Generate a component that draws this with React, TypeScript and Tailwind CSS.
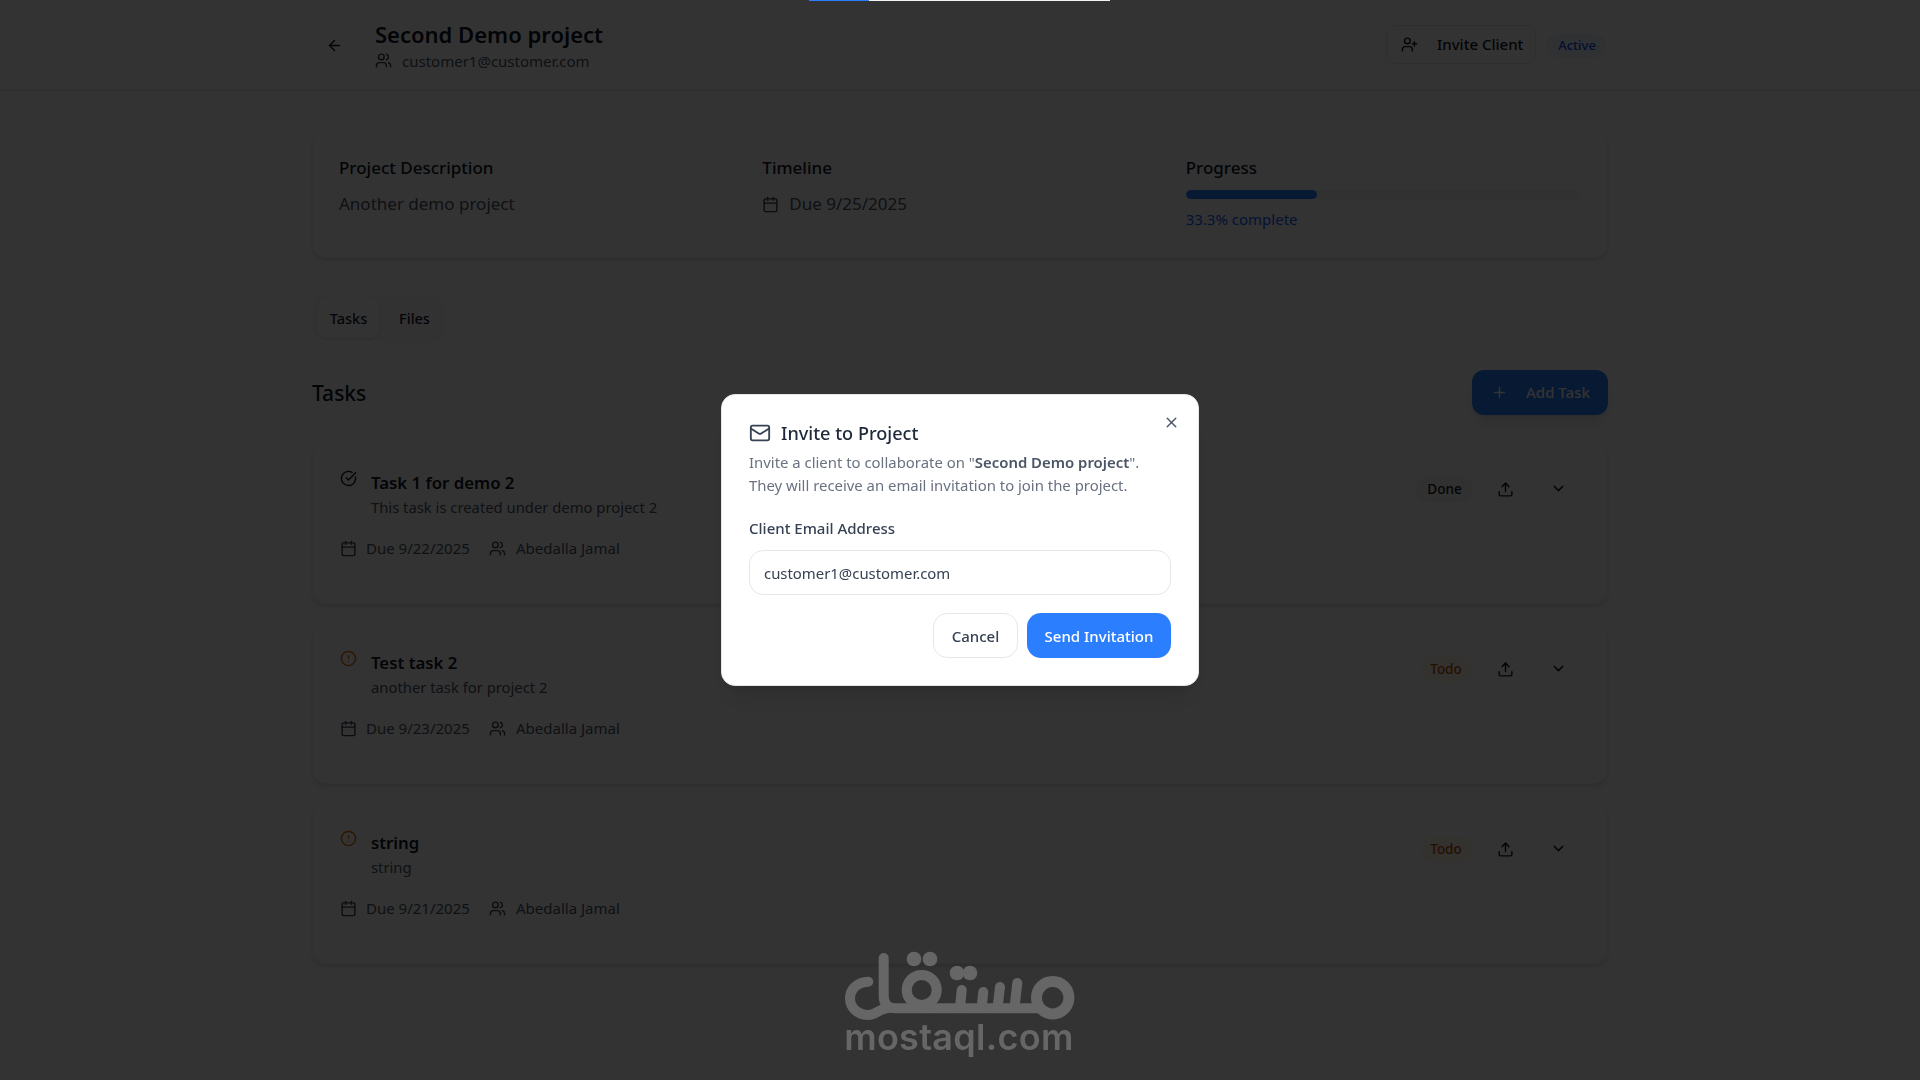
import { ArrowLeft, Users, UserPlus, Calendar, CircleCheckBig, CircleAlert, Upload, ChevronDown, Plus, Mail, X } from "lucide-react";

const tasks = [
  { title: "Task 1 for demo 2", desc: "This task is created under demo project 2", due: "Due 9/22/2025", status: "Done", done: true },
  { title: "Test task 2", desc: "another task for project 2", due: "Due 9/23/2025", status: "Todo", done: false },
  { title: "string", desc: "string", due: "Due 9/21/2025", status: "Todo", done: false },
];

function TaskCard({ t }: { t: (typeof tasks)[number] }) {
  return (
    <div className="h-[161px] rounded-[14px] border border-gray-100 bg-white shadow-md px-[27px] pt-[26px] flex justify-between">
      <div>
        <div className="flex gap-[14px]">
          {t.done ? (
            <CircleCheckBig className="w-[17px] h-[17px] text-gray-900" strokeWidth={2} />
          ) : (
            <CircleAlert className="w-[17px] h-[17px] text-amber-600" strokeWidth={2} />
          )}
          <div className="pt-[1px]">
            <div className="text-[16.8px] leading-[24px] font-semibold text-gray-900">{t.title}</div>
            <div className="text-[14.8px] leading-[24px] text-gray-600">{t.desc}</div>
          </div>
        </div>
        <div className="flex items-center mt-[17px] text-[15px] leading-[24px] text-gray-600">
          <Calendar className="w-[17px] h-[17px] text-gray-700 mr-[9px]" />
          <span className="w-[123px]">{t.due}</span>
          <Users className="w-[17px] h-[17px] text-gray-700 mr-[10px]" />
          <span>Abedalla Jamal</span>
        </div>
      </div>
      <div className="flex items-start pt-[7px] pr-[13px]">
        <span
          className={`h-[25px] flex items-center justify-center rounded-full text-[13.5px] font-medium ${
            t.done ? "w-[57px] bg-gray-100 text-gray-900" : "w-[52px] pr-[2px] bg-amber-50 text-amber-700"
          }`}
        >
          {t.status}
        </span>
        <Upload className="w-[17px] h-[17px] text-gray-900 ml-[24px] mt-[4px]" />
        <ChevronDown className="w-[17px] h-[17px] text-gray-900 ml-[36px] mt-[3px]" />
      </div>
    </div>
  );
}

function Logo() {
  return (
    <svg viewBox="845 953 230 67" className="w-[230px] h-[67px] overflow-visible" fill="none" stroke="#666666" strokeWidth="10" strokeLinecap="round" strokeLinejoin="round">
      <path d="M868.3 981.7 C858 981.7 850 989 850 998.3 C850 1008 858 1015 868.3 1015 C876 1015 880 1008.3 888 1008.3" />
      <path d="M883.7 958 V996 Q883.7 1008.3 896 1008.3 H1040" />
      <circle cx="921.7" cy="990" r="15" />
      <path d="M961.7 990 L960 1008 M983.3 992 L981.5 1008 M1000 987 L997.5 1008 M1017.3 983 L1014.5 1008" />
      <circle cx="1052.7" cy="997.7" r="16.2" strokeWidth="11" />
      <g fill="#666666" stroke="none">
        <circle cx="914" cy="959" r="7.3" />
        <circle cx="930" cy="959" r="7.3" />
        <circle cx="957" cy="973" r="7.3" />
        <circle cx="970" cy="973" r="7.3" />
      </g>
    </svg>
  );
}

export default function App() {
  return (
    <div className="relative h-screen overflow-hidden bg-white font-['Noto_Sans',sans-serif]">
      <header className="h-[91px] border-b border-gray-200 bg-white">
        <div className="w-[1296px] mx-auto h-full flex items-center justify-between pt-[1px]">
          <div className="flex items-center">
            <ArrowLeft className="w-[17px] h-[17px] text-gray-900 ml-[14px] mt-[-1px]" />
            <div className="ml-[32px]">
              <div className="text-[22px] leading-[28px] font-semibold text-gray-900 mt-[-1px]">Second Demo project</div>
              <div className="flex items-center text-[15px] leading-[20px] text-gray-600 mt-[3px]">
                <Users className="w-[17px] h-[17px] text-gray-700 mr-[10px]" />
                customer1@customer.com
              </div>
            </div>
          </div>
          <div className="flex items-center mt-[-2px]">
            <div className="h-[39px] w-[150px] mr-[1px] rounded-[10px] border border-gray-200 flex items-center pl-[14px] text-[15px] font-medium text-gray-900">
              <UserPlus className="w-[17px] h-[17px] mr-[19px]" />
              Invite Client
            </div>
            <div className="h-[24px] w-[60px] ml-[9px] mr-[2px] mt-[2px] pl-[2px] rounded-full bg-blue-50 flex items-center justify-center text-[13px] font-medium text-blue-700">Active</div>
          </div>
        </div>
      </header>
      <main className="w-[1296px] mx-auto pt-[39px]">
        <section className="h-[128px] rounded-[14px] border border-gray-100 shadow-md bg-white px-[26px] pt-[25px] grid grid-cols-3 gap-[28px]">
          <div>
            <div className="text-[17px] leading-[24px] font-medium text-gray-900">Project Description</div>
            <div className="text-[17px] leading-[24px] text-gray-600 mt-[12px]">Another demo project</div>
          </div>
          <div>
            <div className="text-[17px] leading-[24px] font-medium text-gray-900">Timeline</div>
            <div className="flex items-center text-[17px] leading-[24px] text-gray-600 mt-[12px]">
              <Calendar className="w-[17px] h-[17px] text-gray-700 mr-[10px]" />
              Due 9/25/2025
            </div>
          </div>
          <div>
            <div className="text-[17px] leading-[24px] font-medium text-gray-900">Progress</div>
            <div className="h-[9px] rounded-full bg-gray-100 mt-[10px] overflow-hidden">
              <div className="h-full w-[33.3%] rounded-full bg-blue-500" />
            </div>
            <div className="text-[15px] leading-[20px] text-blue-600 mt-[10px]">33.3% complete</div>
          </div>
        </section>
        <div className="mt-[36px] h-[48px] w-[133px] rounded-[14px] bg-gray-50 flex items-center pl-[5px] text-[14.5px] font-medium text-gray-900">
          <div className="w-[63px] shrink-0 h-[40px] rounded-[10px] bg-white shadow-sm flex items-center justify-center pt-[1px]">Tasks</div>
          <div className="w-[69px] shrink-0 text-center pt-[1px]">Files</div>
        </div>
        <div className="mt-[28px] flex items-center justify-between">
          <div className="text-[21px] font-medium text-gray-900 pt-[2px]">Tasks</div>
          <div className="h-[45px] w-[136px] rounded-[12px] bg-blue-500 text-white shadow-lg flex items-center pl-[19px] text-[15px] font-medium">
            <Plus className="w-[17px] h-[17px] mr-[18px]" />
            Add Task
          </div>
        </div>
        <div className="mt-[28px] flex flex-col gap-[19px]">
          {tasks.map((t) => (
            <TaskCard key={t.title + t.due} t={t} />
          ))}
        </div>
      </main>

      <div className="fixed inset-0 bg-black/80" />

      <div className="fixed top-0 left-[809px] w-[301px] h-[1px] bg-gray-100">
        <div className="w-[60px] h-full bg-blue-500" />
      </div>

      <div className="fixed top-[394px] left-[721px] w-[478px] h-[292px] rounded-[14px] bg-white border border-gray-200 shadow-xl px-[27px] pt-[26px]">
        <X className="absolute top-[19px] right-[18px] w-[17px] h-[17px] text-gray-600" />
        <div className="flex items-center text-[18.1px] leading-[24px] font-medium text-gray-800">
          <Mail className="w-[22px] h-[22px] mr-[10px] text-gray-700" />
          Invite to Project
        </div>
        <p className="text-[14.9px] leading-[23px] text-gray-500 mt-[6px]">
          Invite a client to collaborate on "<span className="font-semibold text-gray-600">Second Demo project</span>".
          <br />
          They will receive an email invitation to join the project.
        </p>
        <div className="text-[15px] leading-[20px] font-medium text-gray-700 mt-[21px]">Client Email Address</div>
        <div className="h-[45px] mt-[12px] rounded-[14px] border border-gray-200 flex items-center pl-[14px] pt-[1px] text-[14.9px] text-gray-700">customer1@customer.com</div>
        <div className="flex justify-end gap-[9px] mt-[18px]">
          <div className="h-[45px] w-[85px] rounded-[14px] border border-gray-200 flex items-center justify-center pt-[1px] text-[15px] font-medium text-gray-700">Cancel</div>
          <div className="h-[45px] w-[144px] rounded-[14px] bg-blue-500 flex items-center justify-center pt-[1px] text-[15px] font-medium text-white">Send Invitation</div>
        </div>
      </div>

      <div className="fixed top-[953px] left-[845px] w-[230px] flex flex-col items-center">
        <Logo />
        <div className="font-['Inter',sans-serif] font-semibold text-[36px] tracking-[0.3px] leading-[40px] text-[#666666] whitespace-nowrap mt-[-3px] ml-[-2px]">mostaql.com</div>
      </div>
    </div>
  );
}
